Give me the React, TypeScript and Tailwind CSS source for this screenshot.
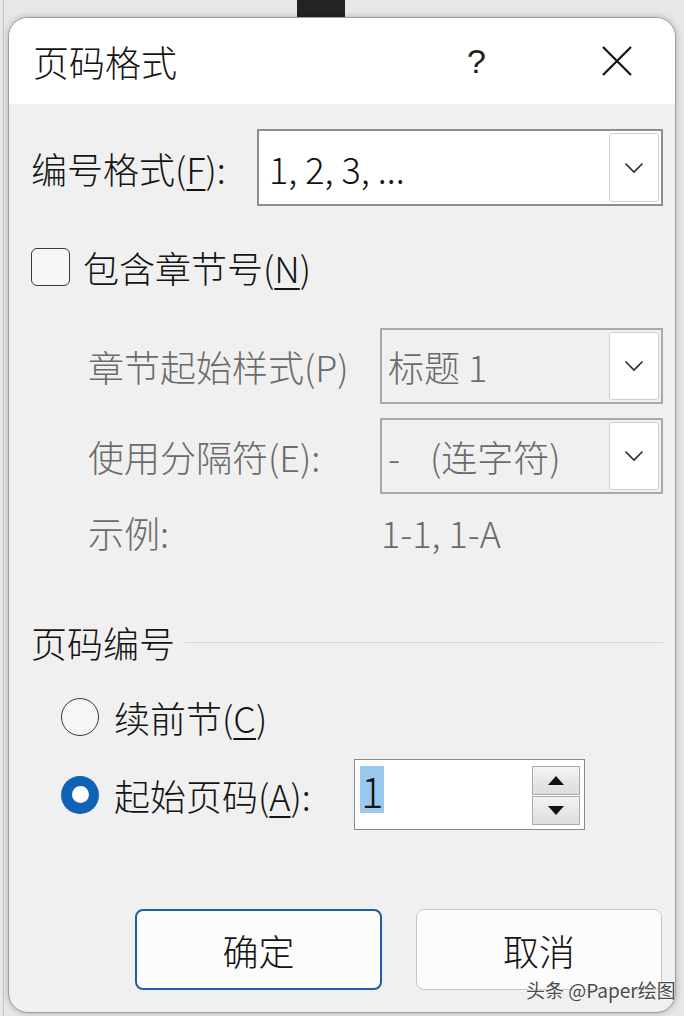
import React from 'react';

const Chevron = () => (
    <svg width="20" height="12" viewBox="0 0 20 12" fill="none">
        <path d="M1.5 1.5 L10 10 L18.5 1.5" stroke="#2b2b2b" strokeWidth="1.6" />
    </svg>
);

const Select = ({ value, disabled }: { value: React.ReactNode; disabled?: boolean }) => (
    <div
        className={`flex items-center justify-between h-full border-2 ${
            disabled ? 'bg-[#f0f0f0] border-[#a9a9a9] pl-[6px] text-[#6b6b6b]' : 'bg-white border-[#8e8e8e] pl-[10px] text-[#111]'
        }`}
    >
        <span className="leading-none whitespace-pre">{value}</span>
        <div className="mr-[2px] w-[50px] self-stretch my-[2px] bg-white border border-[#cfcfcf] rounded-[3px] flex items-center justify-center">
            <Chevron />
        </div>
    </div>
);

const Radio = ({ checked }: { checked?: boolean }) =>
    checked ? (
        <div className="w-[38px] h-[38px] rounded-full bg-[#0f62b5] flex items-center justify-center shrink-0">
            <div className="w-[17px] h-[17px] rounded-full bg-white" />
        </div>
    ) : (
        <div className="w-[38px] h-[38px] rounded-full border-[1.5px] border-[#3a3a3a] bg-[#f6f6f6] shrink-0" />
    );

const App = () => {
    return (
        <div className="relative w-[684px] h-[1016px] overflow-hidden bg-[#e7e7e7] font-['Noto_Sans_CJK_SC',sans-serif] font-light text-[#141414]">
            {/* window behind */}
            <div className="absolute left-[297px] top-0 w-[48px] h-[17px] bg-[#232323]" />
            <div className="absolute left-[3px] top-0 w-[1px] h-full bg-[#c4c4c4]" />

            {/* Dialog */}
            <div className="relative ml-[8px] mt-[17px] w-[668px] h-[996px] rounded-[20px] border border-[#9d9d9d] bg-[#f0f0f0] overflow-hidden shadow-[0_0_6px_rgba(0,0,0,0.25)] flex flex-col">
                {/* Title bar */}
                <div className="h-[86px] bg-white flex items-center pl-[24px] shrink-0">
                    <span className="text-[36px] leading-none">页码格式</span>
                    <span className="ml-[290px] text-[34px] leading-none font-['Liberation_Sans',sans-serif] font-light text-[#222]">?</span>
                    <svg className="ml-[116px]" width="30" height="30" viewBox="0 0 30 30">
                        <path d="M1 1 L29 29 M29 1 L1 29" stroke="#111" strokeWidth="2.2" />
                    </svg>
                </div>

                {/* Body */}
                <div className="flex flex-col pl-[22px] pr-[12px] text-[36px]">
                    {/* Number format */}
                    <div className="mt-[25px] h-[77px] flex items-center">
                        <span className="w-[226px] leading-none">
                            编号格式(<span className="underline underline-offset-[5px] decoration-[2px]">F</span>):
                        </span>
                        <div className="flex-1 h-full">
                            <Select value="1, 2, 3, ..." />
                        </div>
                    </div>

                    {/* include chapter */}
                    <div className="mt-[42px] h-[38px] flex items-center">
                        <div className="w-[39px] h-[38px] rounded-[6px] border-[1.5px] border-[#3a3a3a] bg-[#f7f7f7]" />
                        <span className="ml-[13px] leading-none">
                            包含章节号(<span className="underline underline-offset-[5px] decoration-[2px]">N</span>)
                        </span>
                    </div>

                    {/* chapter style */}
                    <div className="mt-[42px] h-[76px] flex items-center text-[#6b6b6b]">
                        <span className="ml-[57px] w-[292px] leading-none">章节起始样式(P)</span>
                        <div className="flex-1 h-full">
                            <Select value="标题 1" disabled />
                        </div>
                    </div>

                    <div className="mt-[14px] h-[76px] flex items-center text-[#6b6b6b]">
                        <span className="ml-[57px] w-[292px] leading-none">使用分隔符(E):</span>
                        <div className="flex-1 h-full">
                            <Select
                                value={
                                    <>
                                        <span className="mr-[30px]">-</span>(连字符)
                                    </>
                                }
                                disabled
                            />
                        </div>
                    </div>

                    <div className="mt-[18px] h-[40px] flex items-center text-[#6b6b6b]">
                        <span className="ml-[57px] w-[293px] leading-none">示例:</span>
                        <span className="leading-none">1-1, 1-A</span>
                    </div>

                    {/* Page numbering */}
                    <div className="mt-[72px] h-[36px] flex items-center">
                        <span className="leading-none">页码编号</span>
                        <div className="ml-[10px] flex-1 h-[1px] bg-[#d6d6d6]" />
                    </div>

                    <div className="mt-[38px] h-[38px] flex items-center pl-[30px]">
                        <Radio />
                        <span className="ml-[15px] leading-none">
                            续前节(<span className="underline underline-offset-[5px] decoration-[2px]">C</span>)
                        </span>
                    </div>

                    <div className="mt-[23px] h-[71px] flex items-center pl-[30px]">
                        <Radio checked />
                        <span className="ml-[15px] w-[240px] leading-none">
                            起始页码(<span className="underline underline-offset-[5px] decoration-[2px]">A</span>):
                        </span>
                        <div className="w-[231px] h-full bg-white border border-[#8a8a8a] flex items-start justify-between pl-[5px] pr-[4px] pt-[6px]">
                            <span className="bg-[#99c9ef] text-[42px] leading-[47px] h-[47px] px-[1px]">1</span>
                            <div className="flex flex-col gap-[1px]">
                                <div className="w-[48px] h-[29px] border border-[#a9a9a9] bg-gradient-to-b from-[#f4f4f4] to-[#dcdcdc] flex items-center justify-center">
                                    <svg width="16" height="9" viewBox="0 0 16 9"><path d="M8 0 L16 9 L0 9 Z" fill="#111" /></svg>
                                </div>
                                <div className="w-[48px] h-[29px] border border-[#a9a9a9] bg-gradient-to-b from-[#f4f4f4] to-[#dcdcdc] flex items-center justify-center">
                                    <svg width="16" height="9" viewBox="0 0 16 9"><path d="M0 0 L16 0 L8 9 Z" fill="#111" /></svg>
                                </div>
                            </div>
                        </div>
                    </div>

                    {/* Buttons */}
                    <div className="mt-[79px] h-[81px] flex gap-[34px] ml-[104px]">
                        <button className="w-[247px] h-full rounded-[8px] border-2 border-[#1d5fa3] bg-[#fcfcfd] flex items-center justify-center leading-none">
                            确定
                        </button>
                        <button className="w-[246px] h-full rounded-[8px] border border-[#c6c6c6] bg-[#fcfcfd] flex items-center justify-center leading-none">
                            取消
                        </button>
                    </div>
                </div>
            </div>

            {/* watermark */}
            <div className="absolute left-[526px] top-[980px] text-[19px] leading-none font-normal text-[#4a4a4a] [text-shadow:0_0_2px_#fff,0_0_2px_#fff]">
                头条 @Paper绘图
            </div>
        </div>
    );
};

export default App;
